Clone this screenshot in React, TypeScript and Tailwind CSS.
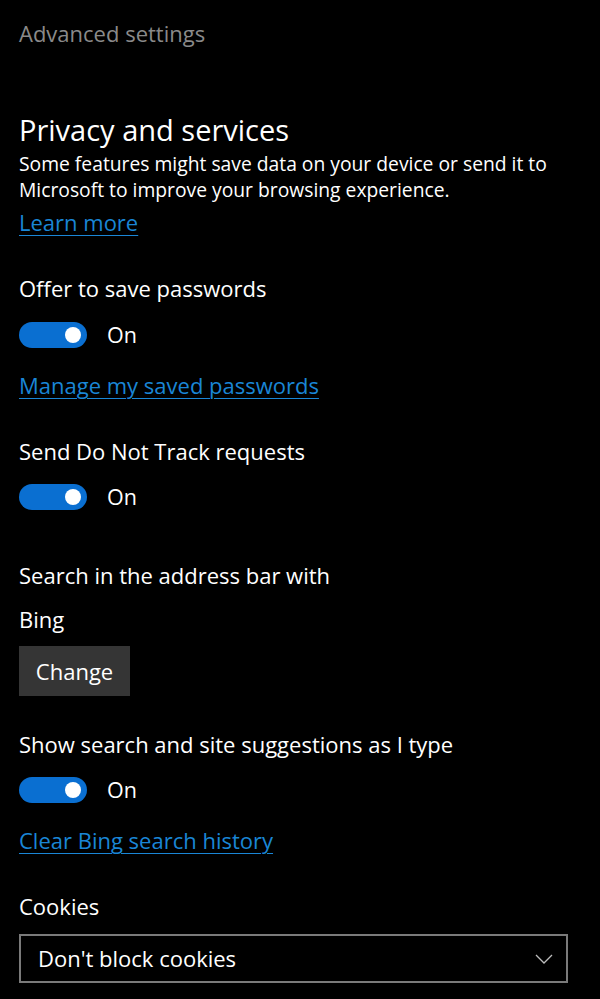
const font = { fontFamily: '"Open Sans", "Noto Sans", sans-serif' };

function Toggle() {
  return (
    <div className="flex items-center h-[26px] gap-[20px]">
      <div className="relative w-[68px] h-[26px] rounded-full bg-[#0a6fd1]">
        <div className="absolute right-[6px] top-[5px] w-[16px] h-[16px] rounded-full bg-white" />
      </div>
      <span className="text-[21.5px] leading-[26px] text-white">On</span>
    </div>
  );
}

function Label({ children, className = "" }: { children: React.ReactNode; className?: string }) {
  return <div className={`text-[22px] leading-[26px] text-white ${className}`}>{children}</div>;
}

function Link({ children, className = "" }: { children: React.ReactNode; className?: string }) {
  return (
    <div className={`text-[22px] leading-[26px] ${className}`}>
      <a href="#" className="text-[#1a86d6] underline underline-offset-[4px] decoration-[1px]">
        {children}
      </a>
    </div>
  );
}

export default function App() {
  return (
    <div className="w-[600px] h-[999px] overflow-hidden bg-black px-[19px] pt-[18px]" style={font}>
      <div className="text-[22px] leading-[30px] text-[#8a8a8a]">Advanced settings</div>

      <h1 className="mt-[63px] text-[29px] leading-[38px] text-white">Privacy and services</h1>
      <p className="mt-[2px] text-[19.3px] leading-[26px] text-white">
        Some features might save data on your device or send it to
        <br />
        Microsoft to improve your browsing experience.
      </p>
      <Link className="mt-[6px]">Learn more</Link>

      <Label className="mt-[40px]">Offer to save passwords</Label>
      <div className="mt-[21px]">
        <Toggle />
      </div>
      <Link className="mt-[24px]">Manage my saved passwords</Link>

      <Label className="mt-[40px]">Send Do Not Track requests</Label>
      <div className="mt-[20px]">
        <Toggle />
      </div>

      <Label className="mt-[52px]">Search in the address bar with</Label>
      <Label className="mt-[18px]">Bing</Label>
      <button className="mt-[14px] w-[111px] h-[50px] bg-[#353535] text-[22px] text-white">
        Change
      </button>

      <Label className="mt-[35px]">Show search and site suggestions as I type</Label>
      <div className="mt-[20px]">
        <Toggle />
      </div>
      <Link className="mt-[24px]">Clear Bing search history</Link>

      <Label className="mt-[40px]">Cookies</Label>
      <div className="mt-[15px] w-[549px] h-[49px] border-2 border-[#7a7a7a] flex items-center justify-between pl-[17px] pr-[13px]">
        <span className="text-[22px] text-white">Don't block cookies</span>
        <svg width="18" height="10" viewBox="0 0 18 10" fill="none">
          <path d="M1 1l8 8 8-8" stroke="#bdbdbd" strokeWidth="1.3" />
        </svg>
      </div>
    </div>
  );
}
